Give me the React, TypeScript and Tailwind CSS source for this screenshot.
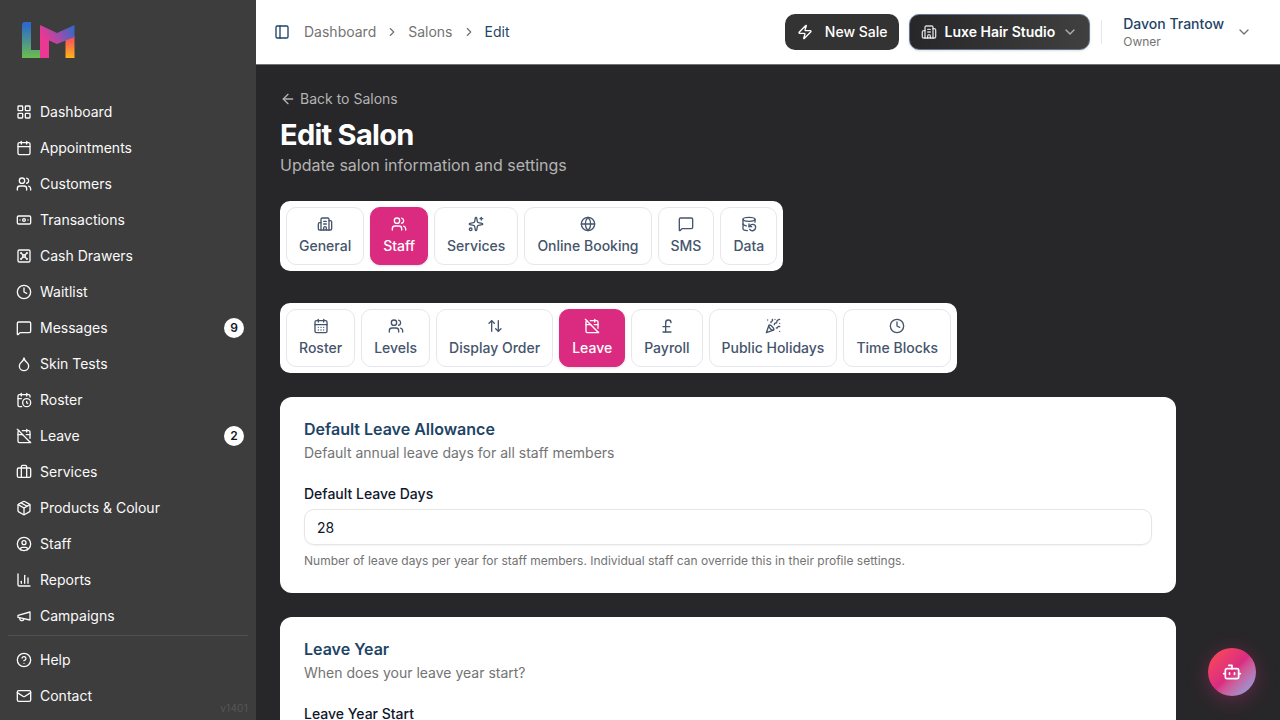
import type { ComponentType, ReactNode } from "react";
import {
  ArrowLeft, ArrowUpDown, Banknote, Bot, Building2, Calendar, CalendarClock, CalendarDays, CalendarOff,
  ChartColumn, ChevronDown, ChevronRight, CircleHelp, CircleUser, Clock, DatabaseBackup, Droplet, Globe,
  LayoutGrid, Mail, MessageSquare, Package, PanelLeft, PartyPopper, PoundSterling, Sparkles, Users, Vault, Zap,
} from "lucide-react";

type IconType = ComponentType<{ className?: string }>;
type NavEntry = { label: string; icon: IconType; badge?: number };

function OutlineIcon({ className, children }: { className?: string; children: ReactNode }) {
  return (
    <svg className={className} viewBox="0 0 24 24" fill="none" stroke="currentColor" strokeWidth="2" strokeLinecap="round" strokeLinejoin="round" aria-hidden="true">
      {children}
    </svg>
  );
}

function SuitcaseIcon({ className }: { className?: string }) {
  return (
    <OutlineIcon className={className}>
      <rect x="2" y="6" width="20" height="14" rx="2" />
      <path d="M16 20V4a2 2 0 0 0-2-2h-4a2 2 0 0 0-2 2v16" />
    </OutlineIcon>
  );
}

function MegaphoneIcon({ className }: { className?: string }) {
  return (
    <OutlineIcon className={className}>
      <path d="m3 11 18-5v12L3 14v-3z" />
      <path d="M11.6 16.8a3 3 0 1 1-5.8-1.6" />
    </OutlineIcon>
  );
}

const mainNav: NavEntry[] = [
  { label: "Dashboard", icon: LayoutGrid },
  { label: "Appointments", icon: Calendar },
  { label: "Customers", icon: Users },
  { label: "Transactions", icon: Banknote },
  { label: "Cash Drawers", icon: Vault },
  { label: "Waitlist", icon: Clock },
  { label: "Messages", icon: MessageSquare, badge: 9 },
  { label: "Skin Tests", icon: Droplet },
  { label: "Roster", icon: CalendarClock },
  { label: "Leave", icon: CalendarOff, badge: 2 },
  { label: "Services", icon: SuitcaseIcon },
  { label: "Products & Colour", icon: Package },
  { label: "Staff", icon: CircleUser },
  { label: "Reports", icon: ChartColumn },
  { label: "Campaigns", icon: MegaphoneIcon },
];

const footerNav: NavEntry[] = [
  { label: "Help", icon: CircleHelp },
  { label: "Contact", icon: Mail },
];

const salonTabs: NavEntry[] = [
  { label: "General", icon: Building2 },
  { label: "Staff", icon: Users },
  { label: "Services", icon: Sparkles },
  { label: "Online Booking", icon: Globe },
  { label: "SMS", icon: MessageSquare },
  { label: "Data", icon: DatabaseBackup },
];

const staffTabs: NavEntry[] = [
  { label: "Roster", icon: CalendarDays },
  { label: "Levels", icon: Users },
  { label: "Display Order", icon: ArrowUpDown },
  { label: "Leave", icon: CalendarOff },
  { label: "Payroll", icon: PoundSterling },
  { label: "Public Holidays", icon: PartyPopper },
  { label: "Time Blocks", icon: Clock },
];

function Logo() {
  return (
    <svg className="h-9 w-[54px]" viewBox="0 0 54 36" role="img" aria-label="Salon logo">
      <defs>
        <linearGradient id="logo-l" x1="0" y1="0" x2="0" y2="1">
          <stop offset="0.1" stopColor="#2f6bc9" />
          <stop offset="1" stopColor="#6cbd4e" />
        </linearGradient>
        <linearGradient id="logo-m" gradientUnits="userSpaceOnUse" x1="22" y1="24" x2="53" y2="6">
          <stop offset="0.1" stopColor="#ea3893" />
          <stop offset="0.5" stopColor="#a04da8" />
          <stop offset="1" stopColor="#2c6bc9" />
        </linearGradient>
        <linearGradient id="logo-r" x1="0" y1="0" x2="0" y2="1">
          <stop offset="0.1" stopColor="#f9505e" />
          <stop offset="1" stopColor="#fdb515" />
        </linearGradient>
      </defs>
      <path d="M0 3Q0 0 3 0H9V28H19V36H0Z" fill="url(#logo-l)" />
      <path d="M43.500 18L52.500 14V36H43.500Z" fill="url(#logo-r)" />
      <path d="M18 3L35 11L52.500 3V15L35 22L27 18.500V36H18Z" fill="url(#logo-m)" />
    </svg>
  );
}

function NavItem({ label, icon: Icon, badge }: NavEntry) {
  return (
    <li>
      <a href="#" className="flex h-8 items-center gap-2 rounded-md pr-1 pl-2 text-sm text-neutral-50 hover:bg-white/10">
        <Icon className="size-4 shrink-0" />
        <span className="flex-1 truncate">{label}</span>
        {badge !== undefined && (
          <span className="flex h-5 min-w-5 items-center justify-center rounded-full bg-white text-xs font-semibold text-slate-900">
            {badge}
          </span>
        )}
      </a>
    </li>
  );
}

function TabBar({ tabs, active, label }: { tabs: NavEntry[]; active: string; label: string }) {
  return (
    <div role="tablist" aria-label={label} className="flex w-fit gap-1.5 rounded-[10px] bg-white p-1.5">
      {tabs.map(({ label: text, icon: Icon }) => {
        const selected = text === active;
        return (
          <button
            key={text}
            type="button"
            role="tab"
            aria-selected={selected}
            className={
              "flex h-[58px] flex-col items-center gap-1 rounded-[10px] border px-3 py-2 text-sm font-medium " +
              (selected ? "border-[#db2b80] bg-[#db2b80] text-white shadow-sm" : "border-gray-200 bg-white text-slate-600")
            }
          >
            <Icon className="size-4" />
            {text}
          </button>
        );
      })}
    </div>
  );
}

function Card({ title, description, children }: { title: string; description: string; children: ReactNode }) {
  return (
    <section className="rounded-xl bg-white p-6">
      <h2 className="text-base leading-4 font-semibold text-[#1e4466]">{title}</h2>
      <p className="mt-1.5 text-sm text-[#737373]">{description}</p>
      <div className="mt-6">{children}</div>
    </section>
  );
}

export default function App() {
  return (
    <div className="flex h-screen overflow-hidden bg-[#272729] font-[Inter,sans-serif] antialiased">
      <aside className="relative flex w-64 shrink-0 flex-col bg-[#3d3d3d]">
        <a href="#" className="block px-[22px] pt-[22px] pb-[30px]" aria-label="Home">
          <Logo />
        </a>
        <nav className="min-h-0 flex-1 overflow-hidden p-2" aria-label="Main">
          <ul className="flex flex-col gap-1">
            {mainNav.map((item) => (
              <NavItem key={item.label} {...item} />
            ))}
          </ul>
        </nav>
        <nav className="mx-2 border-t border-white/10 py-2" aria-label="Support">
          <ul className="flex flex-col gap-1">
            {footerNav.map((item) => (
              <NavItem key={item.label} {...item} />
            ))}
          </ul>
        </nav>
        <span className="absolute right-2 bottom-1 text-[10px] leading-4 tracking-wide text-[#565656]">v1401</span>
      </aside>

      <div className="flex min-w-0 flex-1 flex-col">
        <header className="flex h-[65px] shrink-0 items-center border-b border-[#737373] bg-white pr-7 pl-[18px]">
          <button type="button" aria-label="Toggle sidebar" className="mr-[14px] flex text-[#1e4466]">
            <PanelLeft className="size-4" />
          </button>
          <nav aria-label="Breadcrumb" className="flex-1">
            <ol className="flex items-center gap-[9px] text-sm text-[#737373]">
              <li><a href="#">Dashboard</a></li>
              <li aria-hidden="true"><ChevronRight className="size-3.5" /></li>
              <li><a href="#">Salons</a></li>
              <li aria-hidden="true"><ChevronRight className="size-3.5" /></li>
              <li aria-current="page" className="text-[#1e4466]">Edit</li>
            </ol>
          </nav>
          <button type="button" className="flex h-9 items-center gap-3 rounded-[10px] bg-[#333333] px-3 text-sm font-medium text-white">
            <Zap className="size-4" />
            New Sale
          </button>
          <button type="button" className="ml-2.5 flex h-9 items-center gap-[7px] rounded-[10px] border border-slate-500 bg-linear-to-r from-[#272729] to-[#404040] px-[11px] text-sm font-semibold text-white shadow-sm">
            <Building2 className="size-4 text-white/80" />
            Luxe Hair Studio
            <ChevronDown className="size-4 text-white/60" />
          </button>
          <div className="ml-[11px] h-6 w-px bg-gray-200" />
          <button type="button" className="ml-[21px] flex items-center gap-3 text-left">
            <span className="flex flex-col">
              <span className="text-sm font-medium text-[#1e4466]">Davon Trantow</span>
              <span className="text-xs text-[#737373]">Owner</span>
            </span>
            <ChevronDown className="size-4 text-[#737373]" />
          </button>
        </header>

        <main className="min-h-0 flex-1 overflow-hidden p-6">
          <a href="#" className="flex w-fit items-center gap-1 text-sm text-[#b3b3b3]">
            <ArrowLeft className="size-4" />
            Back to Salons
          </a>
          <h1 className="mt-2 text-[29px] leading-9 font-bold tracking-tight text-white">Edit Salon</h1>
          <p className="text-base text-[#b3b3b3]">Update salon information and settings</p>
          <div className="mt-6 flex flex-col gap-8">
            <TabBar tabs={salonTabs} active="Staff" label="Salon settings" />
            <TabBar tabs={staffTabs} active="Leave" label="Staff settings" />
          </div>
          <div className="mt-6 flex max-w-4xl flex-col gap-6">
            <Card title="Default Leave Allowance" description="Default annual leave days for all staff members">
              <label htmlFor="leave-days" className="block text-sm leading-[14px] font-medium text-slate-900">Default Leave Days</label>
              <input
                id="leave-days"
                type="text"
                inputMode="numeric"
                defaultValue="28"
                className="mt-2 block h-9 w-full rounded-[10px] border border-neutral-200 px-3 text-sm text-slate-900 shadow-xs"
              />
              <p className="mt-2 text-xs text-[#737373]">
                Number of leave days per year for staff members. Individual staff can override this in their profile settings.
              </p>
            </Card>
            <Card title="Leave Year" description="When does your leave year start?">
              <label htmlFor="leave-start" className="block text-sm leading-[14px] font-medium text-slate-900">Leave Year Start</label>
              <select id="leave-start" className="mt-2 block h-9 w-full rounded-[10px] border border-neutral-200 px-3 text-sm text-slate-900">
                <option>January</option>
                <option>April</option>
              </select>
            </Card>
          </div>
        </main>
      </div>

      <button
        type="button"
        aria-label="Open assistant"
        className="fixed right-6 bottom-6 flex size-12 items-center justify-center rounded-full bg-linear-to-br from-[#ff4b4b] via-[#db2b80] to-[#6aaaf0] text-white shadow-[0_4px_20px_rgba(219,43,128,0.35)]"
      >
        <Bot className="size-5" />
      </button>
    </div>
  );
}
